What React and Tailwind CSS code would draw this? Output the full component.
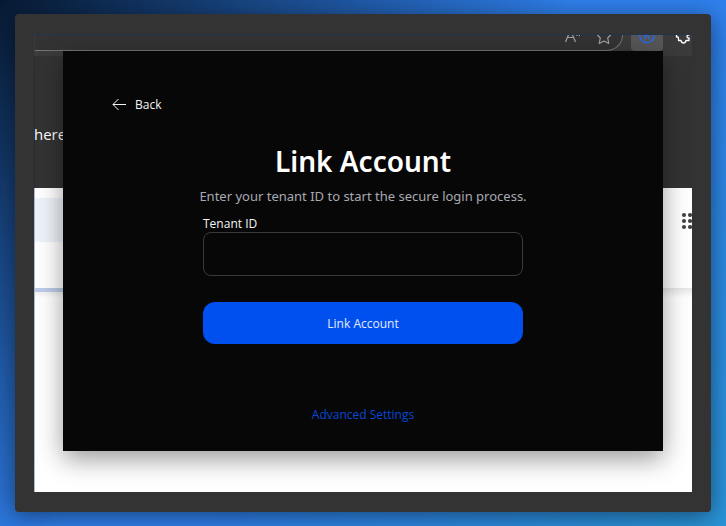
import React from "react";

function Toolbar() {
  return (
    <div className="flex h-[21px] items-start bg-[#3b3b3b] pl-px text-[#a3a3a3]">
      <div className="flex h-4 min-w-0 flex-1 items-start justify-end gap-4 overflow-hidden rounded-br-2xl border-r border-b border-[#737373] bg-[#333333] pr-[10px]">
        <svg className="h-4 w-4" viewBox="0 0 16 16" fill="none" stroke="currentColor" strokeWidth="1.2" aria-hidden="true">
          <path d="M1.5 7 6.5 -5 11.5 7M3.3 2.5h6.400M13 1v-3M15.500 1v-3" />
        </svg>
        <svg className="h-4 w-4" viewBox="0 0 16 16" fill="none" stroke="currentColor" strokeWidth="1.2" strokeLinejoin="round" aria-hidden="true">
          <path d="M8 -7 10 -1.500 15.300 -.8 11.700 3 12.800 8.500 8 6 3.200 8.500 4.300 3 .7 -.8 6 -1.500Z" />
        </svg>
      </div>
      <div className="ml-2 flex h-4 w-8 justify-center overflow-hidden rounded-b bg-[#575757]">
        <svg className="h-4 w-4" viewBox="0 0 16 16" fill="none" stroke="#2969e8" strokeWidth="1.5" aria-hidden="true">
          <circle cx="8" cy="0.5" r="7.2" />
          <path d="M6 -3v7M6 .5 8 -.5 10.500 4M10.500 -3 6 .8" />
        </svg>
      </div>
      <svg className="mr-px ml-3 h-4 w-4" viewBox="0 0 16 16" fill="none" stroke="white" strokeWidth="1.3" strokeLinejoin="round" aria-hidden="true">
        <path d="M1.500 0v2h1q1 0 1 1.500v2h2.500q.5 2.500 2.500 2.500t2.500 -2.500h3v-2.500h-1q-1 -.5 -1 -1.500t1 -1.500h1.500" />
      </svg>
    </div>
  );
}

function AppsDots() {
  return (
    <svg className="mt-6 h-[18px] w-[11px]" viewBox="0 0 11 18" fill="#444444" aria-hidden="true">
      {[3, 9, 15].map((y) => (
        <g key={y}>
          <circle cx="3" cy={y} r="2.1" />
          <circle cx="9" cy={y} r="2.1" />
        </g>
      ))}
    </svg>
  );
}

function BrowserPage() {
  return (
    <div className="flex flex-1 flex-col border-t border-[#223553]">
      <Toolbar />
      <div className="h-[132px] border-l border-[#222e3a] bg-[#333333] pt-[66px] text-[15px] leading-6 text-white">
        <p className="-ml-px">here</p>
      </div>
      <div className="flex h-[100px] justify-between border-l border-[#aabacf] bg-white">
        <div className="mt-[10px] h-11 w-1/2 bg-[#eef2f9]" />
        <AppsDots />
      </div>
      <div className="flex-1 border-l border-[#aabacf] bg-linear-to-b from-[#e6e6e6] to-white to-[10px]">
        <div className="h-1 w-1/2 bg-[#bccbe7]" />
      </div>
    </div>
  );
}

function LinkDialog() {
  return (
    <section
      role="dialog"
      aria-labelledby="dialog-title"
      className="absolute inset-x-[29px] top-[17px] flex h-[400px] flex-col items-center bg-[#070707] pt-11 shadow-[0_8px_24px_rgba(0,0,0,0.4)]"
    >
      <button type="button" className="ml-12 flex items-center gap-2 self-start text-[12px] leading-5 text-[#f5f5f5]">
        <svg className="h-4 w-4" viewBox="0 0 16 16" fill="none" stroke="currentColor" aria-hidden="true">
          <path d="M15 7.500H2M7.500 2 2 7.500 7.500 13" />
        </svg>
        Back
      </button>
      <h1 id="dialog-title" className="mt-7 font-['Noto_Sans',sans-serif] text-[28px] leading-9 font-semibold text-white">
        Link Account
      </h1>
      <p className="mt-[7px] font-['Noto_Sans',sans-serif] text-[13px] leading-5 whitespace-nowrap text-[#a9a9b2]">
        Enter your tenant ID to start the secure login process.
      </p>
      <form className="mt-[10px] flex w-80 flex-col" onSubmit={(e) => e.preventDefault()}>
        <label htmlFor="tenant-id" className="text-[12px] leading-4 text-[#f5f5f5]">
          Tenant ID
        </label>
        <input
          id="tenant-id"
          type="text"
          className="h-11 rounded-lg border border-[#3a3a3a] bg-transparent px-3 text-[14px] text-white"
        />
        <button type="submit" className="mt-[26px] h-[42px] rounded-xl bg-[#0050ef] pt-px text-[12px] text-[#e4ebff]">
          Link Account
        </button>
      </form>
      <a href="#advanced" className="mt-[61px] text-[12px] leading-5 text-[#0747d5]">
        Advanced Settings
      </a>
    </section>
  );
}

export default function App() {
  return (
    <main className="flex min-h-screen bg-[linear-gradient(135deg,#071a33_0%,#2f80ed_46%,#2f80ed_58%,#2a95d8_100%)] px-[15px] py-[14px] font-['Open_Sans','Noto_Sans',sans-serif]">
      <div className="flex flex-1 rounded bg-[#333333] pt-5 pr-[19px] pb-5 pl-[19px] shadow-[0_4px_24px_rgba(0,0,0,0.5)]">
        <div className="relative flex flex-1 overflow-hidden bg-white">
          <BrowserPage />
          <LinkDialog />
        </div>
      </div>
    </main>
  );
}
